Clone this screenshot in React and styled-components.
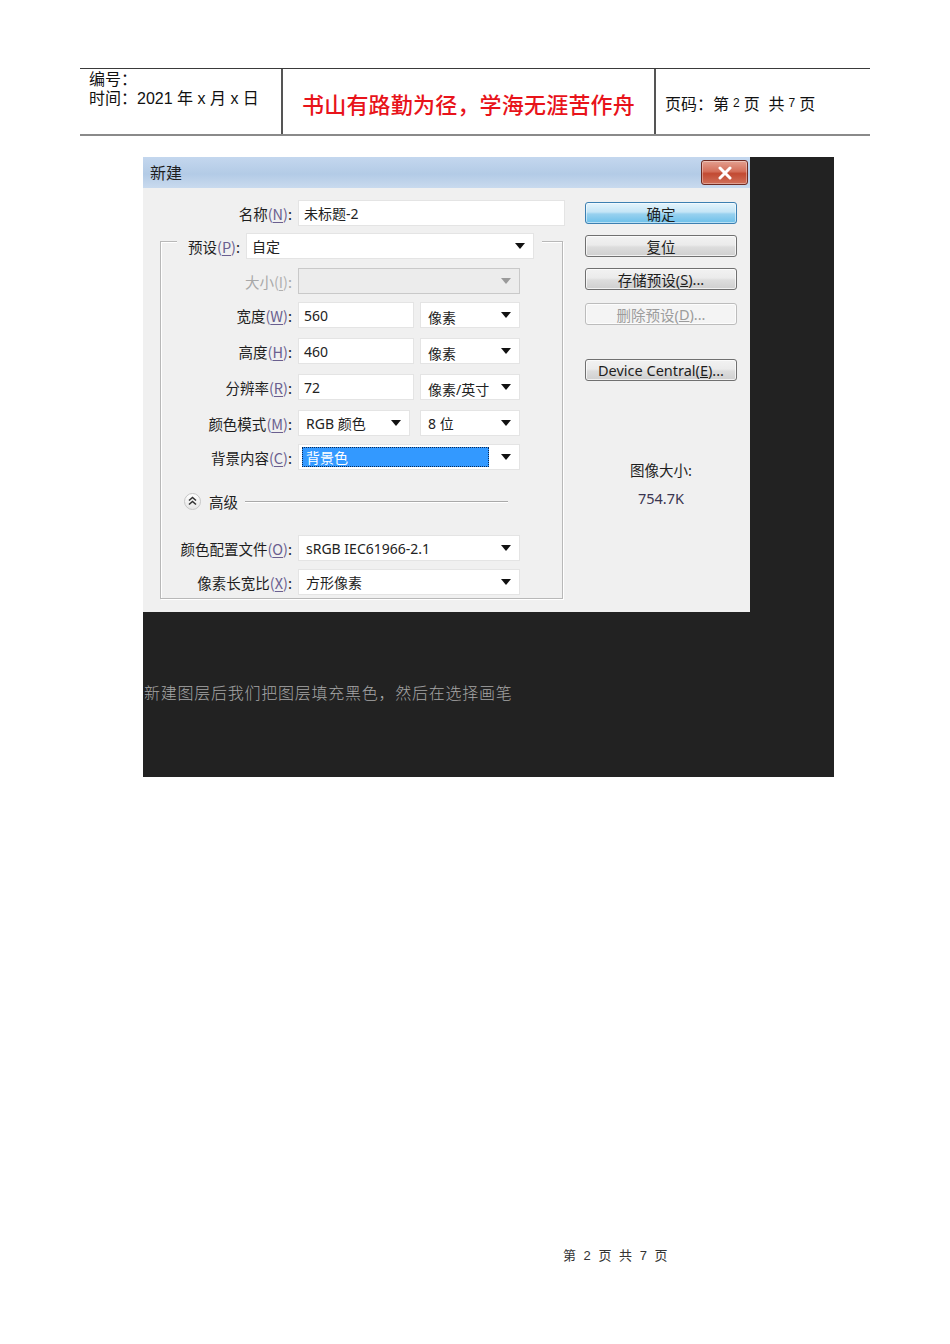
import React from "react";
import styled, { createGlobalStyle } from "styled-components";

const GlobalStyle = createGlobalStyle`
  html, body {
    margin: 0;
    padding: 0;
    background: #ffffff;
  }
  body {
    font-family: "Noto Sans CJK SC", "Noto Sans", sans-serif;
    color: #1a1a1a;
  }
  * {
    box-sizing: border-box;
  }
`;

const Page = styled.div`
  width: 950px;
  height: 1344px;
  padding-top: 68px;
  display: flex;
  flex-direction: column;
`;

const HeaderTable = styled.div`
  margin-left: 80px;
  width: 790px;
  height: 68px;
  border-top: 1px solid #3a3a3a;
  border-bottom: 2px solid #8a8a8a;
  display: grid;
  grid-template-columns: 201px 373px 1fr;
`;

const HeaderCell = styled.div`
  border-left: ${({ $divider }) => ($divider ? "2px solid #555" : "none")};
  font-family: "Liberation Sans", "Noto Sans CJK SC", sans-serif;
  font-size: 16px;
  color: #111;
`;

const InfoCell = styled(HeaderCell)`
  padding: 1px 9px;
  line-height: 19px;
`;

const MottoCell = styled(HeaderCell)`
  display: flex;
  align-items: center;
  justify-content: center;
  padding-top: 3px;
  font-family: "Noto Sans CJK SC", sans-serif;
  font-size: 22px;
  font-weight: 500;
  color: #e8131a;
  letter-spacing: 0.2px;
`;

const PageCell = styled(HeaderCell)`
  display: flex;
  align-items: center;
  padding: 2px 0 0 9px;
`;

const Small = styled.span`
  font-size: 12px;
  margin: 0 4px;
`;

const Figure = styled.div`
  margin: 21px 0 0 143px;
  width: 691px;
  height: 620px;
  background: #222222;
  display: flex;
  flex-direction: column;
`;

const Dialog = styled.div`
  width: 607px;
  height: 455px;
  background: #f0f0f0;
  display: flex;
  flex-direction: column;
`;

const TitleBar = styled.div`
  height: 31px;
  display: flex;
  align-items: center;
  justify-content: space-between;
  padding: 0 2px 2px 7px;
  background: linear-gradient(180deg, #c4d7ee 0%, #b3cbe6 55%, #c9daee 100%);
`;

const Title = styled.span`
  font-size: 16px;
  color: #1e1e1e;
`;

const CloseButton = styled.div`
  width: 47px;
  height: 25px;
  margin-top: 2px;
  border: 1px solid #6e2a22;
  border-radius: 3px;
  background: linear-gradient(180deg, #e3a090 0%, #d46f5a 45%, #c24a32 55%, #d0705a 100%);
  display: flex;
  align-items: center;
  justify-content: center;
  box-shadow: inset 0 0 0 1px rgba(255, 255, 255, 0.35);
`;

const DialogBody = styled.div`
  flex: 1;
  display: flex;
`;

const FormColumn = styled.div`
  width: 427px;
  display: flex;
  flex-direction: column;
`;

const ButtonColumn = styled.div`
  width: 152px;
  margin-left: 15px;
  display: flex;
  flex-direction: column;
`;

const Row = styled.div`
  display: flex;
  align-items: center;
  height: 26px;
  margin-top: ${({ $gap }) => $gap}px;
`;

const Label = styled.div`
  width: ${({ $width }) => $width}px;
  margin-right: 6px;
  text-align: right;
  font-size: 14.5px;
  white-space: nowrap;
  color: ${({ $disabled }) => ($disabled ? "#a8a8a8" : "#1e1e1e")};
`;

const Key = styled.span`
  color: ${({ $disabled }) => ($disabled ? "#b0b0b0" : "#6a5f8f")};
  u {
    text-underline-offset: 2px;
  }
`;

const Field = styled.div`
  width: ${({ $width }) => $width}px;
  height: 26px;
  margin-right: ${({ $after }) => $after || 0}px;
  background: ${({ $disabled }) => ($disabled ? "#ececec" : "#ffffff")};
  border: 1px solid ${({ $disabled }) => ($disabled ? "#c9c9c9" : "#e4e4e4")};
  display: flex;
  align-items: center;
  padding: 0 8px 0 5px;
  font-family: "Noto Sans", "Noto Sans CJK SC", sans-serif;
  font-size: 14px;
  color: #222;
`;

const FieldText = styled.span`
  flex: 1;
  padding-top: ${({ $low }) => ($low ? 3 : 0)}px;
  padding-left: ${({ $indent }) => $indent || 0}px;
  white-space: nowrap;
`;

const Highlight = styled.span`
  flex: 1;
  height: 20px;
  margin: 0 12px 0 -2px;
  background: #3399ff;
  border: 1px dotted #0b2a55;
  color: #ffffff;
  display: flex;
  align-items: center;
  padding-left: 3px;
`;

const Arrow = styled.span`
  width: 0;
  height: 0;
  border-left: 5px solid transparent;
  border-right: 5px solid transparent;
  border-top: 6px solid ${({ $disabled }) => ($disabled ? "#9a9a9a" : "#111")};
`;

const Group = styled.div`
  margin: 15px 0 0 17px;
  width: 403px;
  height: 358px;
  border: 1px solid #b8b8b8;
  box-shadow: inset 1px 1px 0 #ffffff, 1px 1px 0 #ffffff;
  display: flex;
  flex-direction: column;
`;

const Legend = styled.div`
  margin: -9px 0 0 16px;
  padding: 0 8px;
  width: fit-content;
  height: 26px;
  background: #f0f0f0;
  display: flex;
  align-items: center;
`;

const AdvancedRow = styled.div`
  display: flex;
  align-items: center;
  margin: 22px 0 0 23px;
  height: 18px;
`;

const ToggleCircle = styled.span`
  width: 17px;
  height: 17px;
  border-radius: 50%;
  border: 1px solid #c6c6c6;
  background: linear-gradient(180deg, #ffffff, #e6e6e6);
  display: flex;
  align-items: center;
  justify-content: center;
`;

const AdvancedText = styled.span`
  margin-left: 8px;
  font-size: 14.5px;
  color: #1e1e1e;
`;

const Rule = styled.span`
  margin-left: 7px;
  width: 263px;
  height: 1px;
  background: #a9a9a9;
  box-shadow: 0 1px 0 #ffffff;
`;

const Button = styled.div`
  height: 22px;
  margin-top: ${({ $gap }) => $gap}px;
  border: 1px solid ${({ $primary, $disabled }) =>
    $primary ? "#3c7fb1" : $disabled ? "#bcbcbc" : "#707070"};
  border-radius: 3px;
  background: ${({ $primary, $disabled }) =>
    $primary
      ? "linear-gradient(180deg, #e5f4fc 0%, #c4e5f6 45%, #98d1ef 55%, #6cc0ea 100%)"
      : $disabled
      ? "#f4f4f4"
      : "linear-gradient(180deg, #f2f2f2 0%, #ebebeb 45%, #dddddd 55%, #cfcfcf 100%)"};
  box-shadow: inset 0 0 0 1px
    ${({ $primary }) => ($primary ? "rgba(255,255,255,0.5)" : "rgba(255,255,255,0.7)")};
  display: flex;
  align-items: center;
  justify-content: center;
  font-family: "Noto Sans", "Noto Sans CJK SC", sans-serif;
  font-size: 14.5px;
  color: ${({ $disabled }) => ($disabled ? "#9c9c9c" : "#1e1e1e")};
  white-space: nowrap;
`;

const SizeInfo = styled.div`
  margin-top: ${({ $gap }) => $gap}px;
  text-align: center;
  font-family: "Noto Sans", "Noto Sans CJK SC", sans-serif;
  font-size: 14.5px;
  line-height: 20px;
  color: ${({ $muted }) => ($muted ? "#3a3550" : "#1e1e1e")};
`;

const Caption = styled.div`
  margin: 68px 0 0 1px;
  font-family: "Noto Sans CJK SC", sans-serif;
  font-weight: 300;
  font-size: 16px;
  line-height: 24px;
  letter-spacing: 0.75px;
  color: #a6a6a6;
`;

const Footer = styled.div`
  margin: 469px 0 0 563px;
  font-family: "Liberation Sans", "Noto Sans CJK SC", sans-serif;
  font-size: 13px;
  line-height: 20px;
  color: #333;
  word-spacing: 2px;
  letter-spacing: 1px;
`;

const K = ({ ch, disabled }) => (
  <Key $disabled={disabled}>
    (<u>{ch}</u>)
  </Key>
);

const Select = ({ width, after, children, disabled, low, indent }) => (
  <Field $width={width} $after={after} $disabled={disabled}>
    <FieldText $low={low} $indent={indent}>
      {children}
    </FieldText>
    <Arrow $disabled={disabled} />
  </Field>
);

const Input = ({ width, after, children }) => (
  <Field $width={width} $after={after}>
    <FieldText>{children}</FieldText>
  </Field>
);

const CloseIcon = () => (
  <svg width="16" height="14" viewBox="0 0 16 14">
    <path
      d="M3 2 L13 12 M13 2 L3 12"
      stroke="#ffffff"
      strokeWidth="3"
      strokeLinecap="round"
      fill="none"
    />
  </svg>
);

const ChevronsUp = () => (
  <svg width="9" height="10" viewBox="0 0 9 10">
    <path
      d="M1 4.5 L4.5 1.5 L8 4.5 M1 8.5 L4.5 5.5 L8 8.5"
      stroke="#333"
      strokeWidth="1.6"
      fill="none"
    />
  </svg>
);

const LABEL_W = 131;

const App = () => (
  <>
    <GlobalStyle />
    <Page>
      <HeaderTable>
        <InfoCell>
          <div>编号：</div>
          <div>时间：2021 年 x 月 x 日</div>
        </InfoCell>
        <MottoCell $divider>书山有路勤为径，学海无涯苦作舟</MottoCell>
        <PageCell $divider>
          页码：第<Small>2</Small>页&nbsp;&nbsp;共<Small>7</Small>页
        </PageCell>
      </HeaderTable>

      <Figure>
        <Dialog>
          <TitleBar>
            <Title>新建</Title>
            <CloseButton>
              <CloseIcon />
            </CloseButton>
          </TitleBar>
          <DialogBody>
            <FormColumn>
              <Row $gap={12}>
                <Label $width={149}>
                  名称<K ch="N" />:
                </Label>
                <Input width={267}>未标题-2</Input>
              </Row>

              <Group>
                <Legend>
                  <Label $width={55}>
                    预设<K ch="P" />:
                  </Label>
                  <Select width={288}>自定</Select>
                </Legend>

                <Row $gap={9}>
                  <Label $width={LABEL_W} $disabled>
                    大小<K ch="I" disabled />:
                  </Label>
                  <Select width={222} disabled />
                </Row>
                <Row $gap={8}>
                  <Label $width={LABEL_W}>
                    宽度<K ch="W" />:
                  </Label>
                  <Input width={116} after={6}>560</Input>
                  <Select width={100} low indent={2}>像素</Select>
                </Row>
                <Row $gap={10}>
                  <Label $width={LABEL_W}>
                    高度<K ch="H" />:
                  </Label>
                  <Input width={116} after={6}>460</Input>
                  <Select width={100} low indent={2}>像素</Select>
                </Row>
                <Row $gap={10}>
                  <Label $width={LABEL_W}>
                    分辨率<K ch="R" />:
                  </Label>
                  <Input width={116} after={6}>72</Input>
                  <Select width={100} low indent={2}>像素/英寸</Select>
                </Row>
                <Row $gap={10}>
                  <Label $width={LABEL_W}>
                    颜色模式<K ch="M" />:
                  </Label>
                  <Select width={112} after={10} indent={2}>RGB 颜色</Select>
                  <Select width={100} indent={2}>8 位</Select>
                </Row>
                <Row $gap={8}>
                  <Label $width={LABEL_W}>
                    背景内容<K ch="C" />:
                  </Label>
                  <Field $width={222}>
                    <Highlight>背景色</Highlight>
                    <Arrow />
                  </Field>
                </Row>

                <AdvancedRow>
                  <ToggleCircle>
                    <ChevronsUp />
                  </ToggleCircle>
                  <AdvancedText>高级</AdvancedText>
                  <Rule />
                </AdvancedRow>

                <Row $gap={25}>
                  <Label $width={LABEL_W}>
                    颜色配置文件<K ch="O" />:
                  </Label>
                  <Select width={222} indent={2}>sRGB IEC61966-2.1</Select>
                </Row>
                <Row $gap={8}>
                  <Label $width={LABEL_W}>
                    像素长宽比<K ch="X" />:
                  </Label>
                  <Select width={222} indent={2}>方形像素</Select>
                </Row>
              </Group>
            </FormColumn>

            <ButtonColumn>
              <Button $gap={14} $primary>确定</Button>
              <Button $gap={11}>复位</Button>
              <Button $gap={11}>
                存储预设(<u>S</u>)...
              </Button>
              <Button $gap={13} $disabled>
                删除预设(<u>D</u>)...
              </Button>
              <Button $gap={34}>
                Device Central(<u>E</u>)...
              </Button>
              <SizeInfo $gap={79}>图像大小:</SizeInfo>
              <SizeInfo $gap={8} $muted>754.7K</SizeInfo>
            </ButtonColumn>
          </DialogBody>
        </Dialog>
        <Caption>新建图层后我们把图层填充黑色，然后在选择画笔</Caption>
      </Figure>

      <Footer>第 2 页 共 7 页</Footer>
    </Page>
  </>
);

export default App;
